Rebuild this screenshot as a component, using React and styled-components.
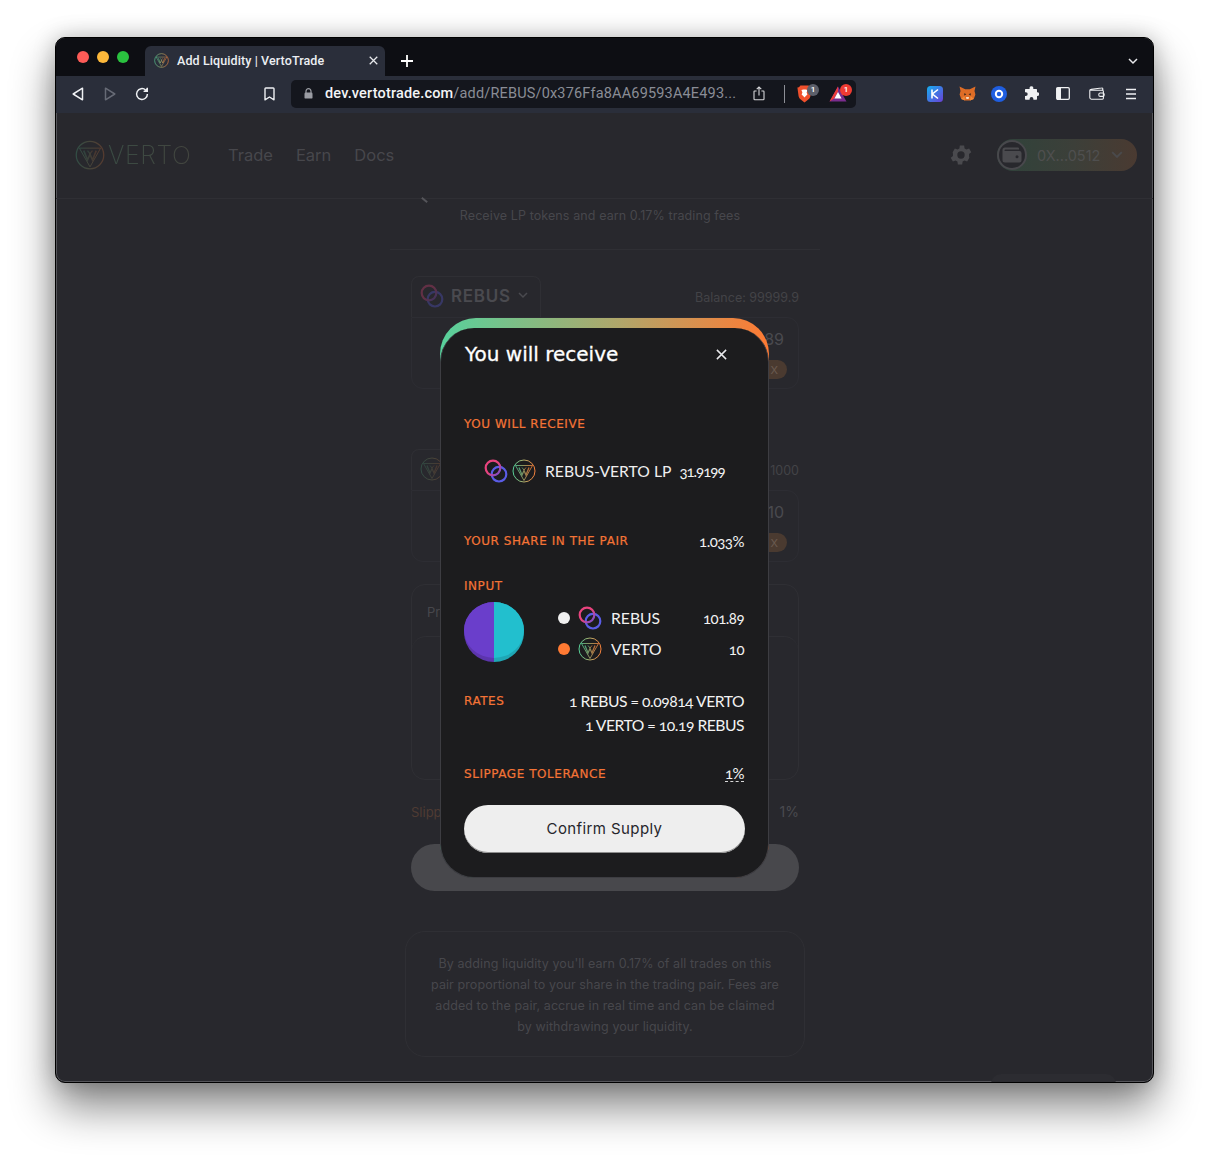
import React from "react";
import styled, { createGlobalStyle } from "styled-components";

const GlobalStyle = createGlobalStyle`
	html, body {
		margin: 0;
		padding: 0;
		background: #ffffff;
	}
	body {
		font-family: "Inter", "Liberation Sans", sans-serif;
	}
	* {
		box-sizing: border-box;
	}
`;

const Stage = styled.div`
	width: 1209px;
	height: 1156px;
	padding: 37px 55px 0;
	overflow: hidden;
`;

const BrowserWindow = styled.div`
	position: relative;
	width: 1099px;
	height: 1046px;
	border-radius: 10px;
	border: 1px solid #000;
	box-shadow: inset 0 0 0 1px #55555a, 0 24px 44px rgba(0, 0, 0, 0.48), 0 0 22px rgba(0, 0, 0, 0.22);
	overflow: hidden;
	background: #28282d;
	display: flex;
	flex-direction: column;
`;

/* browser chrome */
const TitleBar = styled.div`
	height: 38px;
	flex: none;
	background: #0d0e13;
	display: flex;
	align-items: flex-end;
	padding-left: 21px;
`;

const Lights = styled.div`
	display: flex;
	gap: 8px;
	align-self: flex-start;
	margin-top: 13px;
	width: 68px;
`;

const Light = styled.span`
	width: 12px;
	height: 12px;
	border-radius: 50%;
	background: ${(p) => p.$color};
`;

const Tab = styled.div`
	width: 240px;
	height: 30px;
	background: #2a2e3a;
	border-radius: 6px 6px 0 0;
	display: flex;
	align-items: center;
	padding: 0 7px 1px 9px;
	color: #eceef2;
	font-size: 12px;
	font-weight: 600;
`;

const TabTitle = styled.span`
	margin-left: 8px;
	flex: 1;
	font-family: "Roboto", sans-serif;
	font-weight: 500;
	font-size: 12.5px;
	letter-spacing: 0.1px;
`;

const NewTab = styled.span`
	display: flex;
	margin: 0 0 9px 16px;
`;

const TabMenu = styled.span`
	display: flex;
	margin: 0 15px 11px auto;
`;

const ToolBar = styled.div`
	height: 37px;
	flex: none;
	background: #2a2e3a;
	display: flex;
	align-items: center;
	padding: 0 14px 2px 15px;
`;

const ToolSlot = styled.span`
	width: ${(p) => p.$w || 32}px;
	margin-left: ${(p) => p.$ml || 0}px;
	display: flex;
	justify-content: center;
	align-items: center;
	flex: none;
	position: relative;
`;

const UrlBar = styled.div`
	width: 565px;
	height: 28px;
	margin-left: 8px;
	margin-right: 63px;
	background: #14161d;
	border-radius: 5px;
	display: flex;
	align-items: center;
	padding-left: 13px;
	font-family: "Roboto", sans-serif;
	font-size: 14.5px;
	letter-spacing: 0.17px;
	color: #8a8d96;
	flex: none;
`;

const UrlText = styled.span`
	margin-left: 12px;
	width: 428px;
	flex: none;
	white-space: nowrap;
	overflow: hidden;
	b {
		font-weight: 500;
		color: #f3f4f6;
	}
`;

const UrlDivider = styled.span`
	width: 1px;
	height: 18px;
	background: #8d8f96;
	margin: 0 7px 0 19px;
`;

const Badge = styled.span`
	position: absolute;
	top: ${(p) => p.$top}px;
	right: ${(p) => p.$right}px;
	width: 12px;
	height: 12px;
	border-radius: 50%;
	background: ${(p) => p.$color};
	color: #fff;
	font-size: 8px;
	font-weight: 600;
	display: flex;
	align-items: center;
	justify-content: center;
`;

/* dimmed page behind the dialog */
const Page = styled.div`
	position: relative;
	flex: 1;
	overflow: hidden;
	display: flex;
	flex-direction: column;
`;

const Nav = styled.div`
	height: 86px;
	flex: none;
	border-bottom: 1px solid #2f2f34;
	display: flex;
	align-items: center;
	padding: 0 16px 1px 19px;
	color: #47474c;
`;

const LogoWord = styled.span`
	font-size: 25px;
	font-weight: 200;
	letter-spacing: 0.6px;
	margin-left: 3px;
	width: 120px;
	background: linear-gradient(90deg, #3a4c44, 50%, #47423d);
	-webkit-background-clip: text;
	background-clip: text;
	color: transparent;
`;

const NavLink = styled.span`
	font-size: 16.5px;
	margin-right: 23px;
`;

const NavSpacer = styled.span`
	flex: 1;
`;

const WalletPill = styled.div`
	width: 140px;
	height: 32px;
	margin-left: 23px;
	border-radius: 16px;
	background: linear-gradient(90deg, #2f433b, #3c3f39 55%, #4a3a31);
	display: flex;
	align-items: center;
	color: #4f4f4f;
	font-size: 15px;
	gap: 8px;
`;

const WalletCoin = styled.span`
	width: 30px;
	height: 30px;
	border-radius: 50%;
	border: 2px solid #48484c;
	background: #28282d;
	display: flex;
	align-items: center;
	justify-content: center;
	flex: none;
`;

const WalletAddress = styled.span`
	margin-left: 2px;
	font-size: 14.5px;
	width: 66px;
`;

const Column = styled.div`
	width: 430px;
	margin-left: 334px;
	display: flex;
	flex-direction: column;
	position: relative;
`;

const Subtitle = styled.div`
	height: 51px;
	border-bottom: 1px solid #2f2f34;
	font-size: 12.5px;
	color: #47474c;
	text-align: center;
	padding: 9px 10px 0 0;
	letter-spacing: 0.1px;
`;

const BackTick = styled.span`
	position: absolute;
	top: 0;
	left: 31px;
	width: 7px;
	height: 2px;
	background: #55555a;
	transform: rotate(40deg);
`;

const Form = styled.div`
	padding: 26px 21px 0;
	display: flex;
	flex-direction: column;
`;

const TokenHead = styled.div`
	display: flex;
	align-items: center;
	justify-content: space-between;
	height: 41px;
`;

const TokenSelect = styled.div`
	width: 130px;
	height: 41px;
	border: 1px solid #2f2f34;
	border-bottom: none;
	border-radius: 8px 8px 0 0;
	display: flex;
	align-items: center;
	gap: 7px;
	padding: 0 0 3px 8px;
	color: #4a4a4f;
	font-size: 17px;
	font-weight: 600;
	letter-spacing: 0.7px;
`;

const Balance = styled.span`
	font-size: 12.5px;
	color: #434347;
	padding-top: 1px;
`;

const TokenField = styled.div`
	height: 72px;
	margin-bottom: ${(p) => p.$mb}px;
	border-radius: 0 12px 12px 12px;
	border: 1px solid #2d2d33;
	display: flex;
	flex-direction: column;
	align-items: flex-end;
	padding: 11px 14px 0 0;
	color: #4a4a4f;
	font-size: 16px;
	gap: 11px;
`;

const MaxPill = styled.span`
	width: 38px;
	height: 19px;
	margin-right: -3px;
	border-radius: 10px;
	background: #4a3a30;
	color: #6a5a50;
	font-size: 11px;
	display: flex;
	align-items: center;
	justify-content: flex-end;
	padding-right: 9px;
`;

const PricePanel = styled.div`
	height: 196px;
	border: 1px solid #2f2f34;
	border-radius: 14px;
	padding: 19px 0 0 15px;
	font-size: 13px;
	color: #47474c;
	position: relative;
	display: flex;
	flex-direction: column;
	margin-top: 22px;
`;

const PriceInner = styled.div`
	margin: 16px 0 0 -15px;
	flex: 1;
	border-top: 1px solid #2f2f34;
	border-radius: 14px;
`;

const SlippageRow = styled.div`
	display: flex;
	justify-content: space-between;
	margin-top: 24px;
	height: 16px;
	line-height: 16px;
	font-size: 13px;
	color: #4f3b33;
	span:last-child {
		color: #4a4a4f;
		font-size: 14px;
	}
`;

const DisabledButton = styled.div`
	height: 47px;
	margin-top: 24px;
	border-radius: 24px;
	background: #48484c;
`;

const InfoBox = styled.div`
	width: 400px;
	height: 126px;
	margin: 40px 0 0 15px;
	border: 1px solid #2f2f34;
	border-radius: 20px;
	padding: 21px 23px 0;
	text-align: center;
	font-size: 12.5px;
	line-height: 21px;
	color: #47474c;
	letter-spacing: 0.08px;
`;

const FooterStub = styled.div`
	position: absolute;
	left: 935px;
	bottom: -12px;
	width: 125px;
	height: 20px;
	border-radius: 10px;
	background: #2c2c31;
`;

/* dialog */
const Modal = styled.div`
	position: absolute;
	left: 384px;
	top: 205px;
	width: 329px;
	height: 560px;
	border-radius: 36px;
	padding-top: 10px;
	background: linear-gradient(90deg, #57d19c, #b1a66a 55%, #ff7a33);
`;

const ModalBody = styled.div`
	height: 550px;
	border-radius: 34px;
	border: 1px solid #3d3d42;
	border-top: none;
	background: #1c1c1e;
	padding: 13px 24px 0 23px;
	display: flex;
	flex-direction: column;
	color: #f2f2f2;
	font-family: "Lato", "Open Sans", sans-serif;
`;

const ModalHead = styled.div`
	display: flex;
	justify-content: space-between;
	align-items: center;
	height: 26px;
`;

const ModalTitle = styled.h2`
	margin: 0 0 0 1px;
	font-family: "DejaVu Sans", sans-serif;
	font-size: 20px;
	font-weight: 400;
	color: #fff;
	-webkit-text-stroke: 0.3px #fff;
`;

const CloseButton = styled.span`
	display: flex;
	margin-right: 17px;
`;

const Label = styled.span`
	font-family: "DejaVu Sans", sans-serif;
	font-size: 12px;
	color: #f47436;
	letter-spacing: 0.55px;
	-webkit-text-stroke: 0.2px #f47436;
	text-transform: uppercase;
	white-space: nowrap;
	line-height: 14px;
	margin-top: ${(p) => p.$mt || 0}px;
`;

const LabelRow = styled.div`
	margin-top: ${(p) => p.$mt}px;
	display: flex;
	justify-content: space-between;
	align-items: ${(p) => (p.$top ? "flex-start" : "center")};
`;

const Figure = styled.span`
	font-family: "Lato", sans-serif;
	font-feature-settings: "onum";
	font-size: 15px;
	letter-spacing: -0.5px;
	color: #f2f2f2;
	line-height: 16px;
`;

const LpFigure = styled(Figure)`
	letter-spacing: -1px;
`;

const DottedFigure = styled(Figure)`
	border-bottom: 1px dashed #d8d8d8;
	padding-bottom: 1px;
	line-height: 14px;
`;

const LpRow = styled.div`
	margin-top: 27px;
	height: 26px;
	padding-left: 20px;
	display: flex;
	align-items: center;
	gap: 4px;
`;

const LpName = styled.span`
	font-size: 15.7px;
	margin: 0 4px 0 5px;
	color: #eeeeee;
	white-space: nowrap;
`;

const InputGrid = styled.div`
	margin-top: 9px;
	display: flex;
	height: 60px;
`;

const PieWrap = styled.div`
	width: 60px;
	height: 60px;
	flex: none;
	display: flex;
`;

const InputRows = styled.div`
	flex: 1;
	margin-left: 34px;
	display: flex;
	flex-direction: column;
	gap: 7px;
	padding-top: 4px;
`;

const InputRow = styled.div`
	height: 24px;
	display: flex;
	align-items: center;
`;

const Dot = styled.span`
	width: 12px;
	height: 12px;
	border-radius: 50%;
	background: ${(p) => p.$color};
	margin-right: 8px;
`;

const TokenName = styled.span`
	font-size: 15.7px;
	margin-left: 9px;
	flex: 1;
	color: #f0f0f0;
`;

const RatesList = styled.div`
	display: flex;
	flex-direction: column;
	align-items: flex-end;
	gap: 8px;
	font-size: 15.7px;
	line-height: 16px;
	letter-spacing: -0.5px;
	font-feature-settings: "onum";
`;

const ConfirmButton = styled.button`
	margin-top: 23px;
	width: 281px;
	height: 48px;
	padding: 0 0 2px;
	border: none;
	border-radius: 24px;
	background: #eeeeee;
	box-shadow: inset 0 -1px 0 #8d8d8d;
	color: #26262c;
	font-family: "Inter", sans-serif;
	font-size: 15px;
	letter-spacing: 0.4px;
	flex: none;
`;

const RebusMark = ({ id, size = 24, dim }) => (
	<svg width={size} height={size} viewBox="0 0 24 24" fill="none" opacity={dim ? 0.3 : 1}>
		<defs>
			<linearGradient id={id} x1="0" y1="0" x2="1" y2="1">
				<stop offset="0.5" stopColor="#e8437e" />
				<stop offset="0.85" stopColor="#8a4cc0" />
			</linearGradient>
		</defs>
		<circle cx="15" cy="15.2" r="7.3" stroke="#5a5ce6" strokeWidth="2.2" />
		<circle cx="9" cy="9" r="7.3" stroke={`url(#${id})`} strokeWidth="2.2" />
	</svg>
);

const VertoMark = ({ id, size = 24, dim }) => (
	<svg width={size} height={size} viewBox="0 0 24 24" fill="none" opacity={dim ? 0.22 : 1}>
		<defs>
			<linearGradient id={id} x1="0" y1="0.5" x2="1" y2="0.5">
				<stop offset="0" stopColor="#55cf98" />
				<stop offset="0.55" stopColor="#b8a765" />
				<stop offset="1" stopColor="#f57f3a" />
			</linearGradient>
		</defs>
		<circle cx="12" cy="12" r="11" stroke={`url(#${id})`} strokeWidth="1" />
		<path d="M3.5 6.5H20.5L12 21.5Z" stroke={`url(#${id})`} strokeWidth="0.8" />
		<path d="M7 8.5L10 16L12 11.5L14 16L17 8.5" stroke={`url(#${id})`} strokeWidth="1.3" opacity="0.75" />
		<path d="M10 8.5L12 11L14 8.5" stroke={`url(#${id})`} strokeWidth="1" opacity="0.7" />
	</svg>
);

const PieChart = () => (
	<svg width="60" height="60" viewBox="0 0 60 60">
		<path d="M30 0A30 30 0 0 0 30 60Z" fill="#5c35ad" />
		<path d="M30 0A30 30 0 0 1 30 60Z" fill="#1fa7b5" />
		<path d="M30 0A30 28 0 0 0 30 56Z" fill="#6a3ecb" />
		<path d="M30 0A30 28 0 0 1 30 56Z" fill="#22bfce" />
	</svg>
);

const BackIcon = ({ color = "#eef0f3" }) => (
	<svg width="12" height="14" viewBox="0 0 12 14" fill="none" stroke={color} strokeWidth="1.5" strokeLinejoin="round">
		<path d="M10.5 1.2V12.8L1.2 7Z" />
	</svg>
);

const ForwardIcon = () => (
	<svg width="12" height="14" viewBox="0 0 12 14" fill="none" stroke="#666a75" strokeWidth="1.5" strokeLinejoin="round">
		<path d="M1.5 1.2V12.8L10.8 7Z" />
	</svg>
);

const ReloadIcon = () => (
	<svg width="14" height="14" viewBox="0 0 14 14" fill="none" stroke="#eef0f3" strokeWidth="1.5">
		<path d="M12.4 7A5.4 5.4 0 1 1 10.6 3" />
		<path d="M8.6 4.4H12.3V0.8" strokeWidth="1.4" fill="#eef0f3" />
	</svg>
);

const BookmarkIcon = () => (
	<svg width="11" height="14" viewBox="0 0 11 14" fill="none" stroke="#eef0f3" strokeWidth="1.4" strokeLinejoin="round">
		<path d="M1 1.8Q1 1 1.8 1H9.2Q10 1 10 1.8V12.8L5.5 10L1 12.8Z" />
	</svg>
);

const LockIcon = () => (
	<svg width="9" height="11" viewBox="0 0 9 11">
		<path d="M2 5V3.2A2.5 2.5 0 0 1 7 3.2V5" fill="none" stroke="#9a9ca3" strokeWidth="1.2" />
		<rect x="0.5" y="4.6" width="8" height="6" rx="1.2" fill="#9a9ca3" />
	</svg>
);

const ShareIcon = () => (
	<svg width="12" height="15" viewBox="0 0 12 15" fill="none" stroke="#d6d7da" strokeWidth="1.1">
		<path d="M3.6 5H1.6Q1 5 1 5.7V13Q1 13.8 1.8 13.8H10.2Q11 13.8 11 13V5.7Q11 5 10.4 5H8.4" />
		<path d="M6 9.5V1M3.7 3.2L6 1L8.3 3.2" />
	</svg>
);

const BraveIcon = () => (
	<svg width="15" height="18" viewBox="0 0 15 18">
		<path d="M3.4 0.6H11.6L13 2.2L14.6 2.6L13.4 11.2Q13 13.4 11 14.8L7.5 17.4L4 14.8Q2 13.4 1.6 11.2L0.4 2.6L2 2.2Z" fill="#f0502c" />
		<path d="M4.4 5L6.4 4.4H8.6L10.6 5L9.6 7.4L10.4 9.4L8.6 11.2L7.5 12.4L6.4 11.2L4.6 9.4L5.4 7.4Z" fill="#fff" />
	</svg>
);

const BatIcon = () => (
	<svg width="18" height="16" viewBox="0 0 18 16">
		<path d="M9 0.5L0.5 15.5H17.5Z" fill="#7a2c8e" />
		<path d="M9 0.5L0.5 15.5L5 12.5L9 5.5Z" fill="#ee3e3a" />
		<path d="M5.4 12.6L9 6L12.6 12.6Z" fill="#fff" />
	</svg>
);

const KeplrIcon = () => (
	<svg width="16" height="16" viewBox="0 0 16 16">
		<defs>
			<linearGradient id="keplr-grad" x1="0" y1="0" x2="1" y2="1">
				<stop offset="0" stopColor="#14aff0" />
				<stop offset="1" stopColor="#6b3fd6" />
			</linearGradient>
		</defs>
		<rect width="16" height="16" rx="3.5" fill="url(#keplr-grad)" />
		<path d="M5 3.5V12.5M11 3.5L5.4 8L11 12.5" fill="none" stroke="#fff" strokeWidth="1.6" />
	</svg>
);

const FoxIcon = () => (
	<svg width="17" height="15" viewBox="0 0 17 15">
		<path d="M0.5 0.5L6.2 3.3H10.8L16.5 0.5L15.5 5L16.4 8.6L14.8 13L11 14.5H6L2.2 13L0.6 8.6L1.5 5Z" fill="#dd6c26" />
		<path d="M2.2 13L6 14.5L5.4 10ZM14.8 13L11 14.5L11.6 10Z" fill="#f08a3a" />
		<path d="M5.5 7L7.4 8.4L5 9.5ZM11.5 7L9.6 8.4L12 9.5Z" fill="#3c2a1e" />
		<path d="M7 11H10L9.6 13H7.4Z" fill="#f3d9c0" />
	</svg>
);

const RingIcon = () => (
	<svg width="16" height="16" viewBox="0 0 16 16">
		<circle cx="8" cy="8" r="8" fill="#1f5ee0" />
		<circle cx="8" cy="8" r="4.2" fill="#fff" />
		<circle cx="8" cy="8" r="2.2" fill="#1f5ee0" />
	</svg>
);

const PuzzleIcon = () => (
	<svg width="15" height="15" viewBox="0 0 15 15" fill="#f0f1f3">
		<path d="M5.6 1.6A1.9 1.9 0 0 1 9.3 1.6V3H12.3Q13 3 13 3.7V6.2H13.4A1.9 1.9 0 0 1 13.4 10H13V13Q13 13.8 12.3 13.8H9.4V13A1.9 1.9 0 0 0 5.6 13V13.8H1.7Q1 13.8 1 13V10H1.8A1.9 1.9 0 0 0 1.8 6.2H1V3.7Q1 3 1.7 3H5.6Z" />
	</svg>
);

const SidebarIcon = () => (
	<svg width="14" height="13" viewBox="0 0 14 13" fill="none">
		<rect x="0.7" y="0.7" width="12.6" height="11.6" rx="1.2" stroke="#f0f1f3" strokeWidth="1.3" />
		<rect x="0.7" y="0.7" width="4.3" height="11.6" fill="#f0f1f3" />
	</svg>
);

const WalletIcon = () => (
	<svg width="16" height="13" viewBox="0 0 16 13" fill="none" stroke="#f0f1f3" strokeWidth="1.1">
		<path d="M13.8 3.2V2Q13.8 0.8 12.6 1L2.4 2.2Q0.8 2.4 0.8 3.6V10.6Q0.8 12.2 2.4 12.2H13.4Q14.4 12.2 14.4 11V4.4Q14.4 3.2 13.2 3.2H1.4" />
		<rect x="9.8" y="6" width="5.4" height="3.4" rx="1.4" />
	</svg>
);

const MenuIcon = () => (
	<svg width="12" height="12" viewBox="0 0 12 12" stroke="#eef0f3" strokeWidth="1.3">
		<path d="M1 1.5H11M1 6H11M1 10.5H11" />
	</svg>
);

const CrossIcon = ({ size = 10, color = "#e8e9ec", width = 1.4 }) => (
	<svg width={size} height={size} viewBox="0 0 10 10" stroke={color} strokeWidth={width}>
		<path d="M0.8 0.8L9.2 9.2M9.2 0.8L0.8 9.2" />
	</svg>
);

const PlusIcon = () => (
	<svg width="12" height="12" viewBox="0 0 12 12" stroke="#fff" strokeWidth="1.8">
		<path d="M6 0V12M0 6H12" />
	</svg>
);

const ChevronIcon = ({ color = "#e8e9ec", size = 10 }) => (
	<svg width={size} height={size * 0.7} viewBox="0 0 10 7" fill="none" stroke={color} strokeWidth="1.5">
		<path d="M1 1L5 5L9 1" />
	</svg>
);

const GearIcon = () => (
	<svg width="26" height="26" viewBox="0 0 24 24" fill="#4a4a4e">
		<path d="M19.4 13a7.8 7.8 0 0 0 0-2l2.1-1.6-2-3.5-2.5 1a7.6 7.6 0 0 0-1.7-1l-.4-2.7h-4l-.4 2.7a7.6 7.6 0 0 0-1.7 1l-2.5-1-2 3.5L4.6 11a7.8 7.8 0 0 0 0 2l-2.1 1.6 2 3.5 2.5-1a7.6 7.6 0 0 0 1.7 1l.4 2.7h4l.4-2.7a7.6 7.6 0 0 0 1.7-1l2.5 1 2-3.5ZM12 15.4a3.4 3.4 0 1 1 0-6.8 3.4 3.4 0 0 1 0 6.8Z" />
	</svg>
);

const CoinIcon = () => (
	<svg width="20" height="16" viewBox="0 0 20 16">
		<path d="M3 0.5H16Q17 0.5 17 1.5V2.5H3.5Q2.5 2.5 2.5 3.5Q2.5 4 3.5 4H17.5Q19.5 4 19.5 6V13.5Q19.5 15.5 17.5 15.5H3Q0.5 15.5 0.5 13V3Q0.5 0.5 3 0.5Z" fill="#4a4a4e" />
		<circle cx="15" cy="9.8" r="1.5" fill="#28282d" />
	</svg>
);

export default function App() {
	return (
		<Stage>
			<GlobalStyle />
			<BrowserWindow>
				<TitleBar>
					<Lights>
						<Light $color="#fc5b57" />
						<Light $color="#fdb83a" />
						<Light $color="#2ac23f" />
					</Lights>
					<Tab>
						<VertoMark id="tab-verto" size={15} />
						<TabTitle>Add Liquidity | VertoTrade</TabTitle>
						<CrossIcon size={9} />
					</Tab>
					<NewTab>
						<PlusIcon />
					</NewTab>
					<TabMenu>
						<ChevronIcon />
					</TabMenu>
				</TitleBar>
				<ToolBar>
					<ToolSlot $w={14}><BackIcon /></ToolSlot>
					<ToolSlot $w={50}><ForwardIcon /></ToolSlot>
					<ToolSlot $w={14}><ReloadIcon /></ToolSlot>
					<ToolSlot $w={28} $ml={106}><BookmarkIcon /></ToolSlot>
					<UrlBar>
						<LockIcon />
						<UrlText>
							<b>dev.vertotrade.com</b>/add/REBUS/0x376Ffa8AA69593A4E493...
						</UrlText>
						<ToolSlot $w={12}><ShareIcon /></ToolSlot>
						<UrlDivider />
						<ToolSlot $w={24}>
							<BraveIcon />
							<Badge $color="#5c5f6a" $top={-1} $right={-3}>1</Badge>
						</ToolSlot>
						<ToolSlot $w={36} $ml={4}>
							<BatIcon />
							<Badge $color="#ef3b32" $top={-2} $right={4}>1</Badge>
						</ToolSlot>
					</UrlBar>
					<ToolSlot $w={32}><KeplrIcon /></ToolSlot>
					<ToolSlot $w={32}><FoxIcon /></ToolSlot>
					<ToolSlot $w={32}><RingIcon /></ToolSlot>
					<ToolSlot $w={32}><PuzzleIcon /></ToolSlot>
					<ToolSlot $w={32}><SidebarIcon /></ToolSlot>
					<ToolSlot $w={36}><WalletIcon /></ToolSlot>
					<ToolSlot $w={32}><MenuIcon /></ToolSlot>
				</ToolBar>
				<Page>
					<Nav>
						<VertoMark id="nav-verto" size={30} dim />
						<LogoWord>VERTO</LogoWord>
						<NavLink>Trade</NavLink>
						<NavLink>Earn</NavLink>
						<NavLink>Docs</NavLink>
						<NavSpacer />
						<GearIcon />
						<WalletPill>
							<WalletCoin><CoinIcon /></WalletCoin>
							<WalletAddress>0X...0512</WalletAddress>
							<ChevronIcon color="#4a4a4c" size={12} />
						</WalletPill>
					</Nav>
					<Column>
						<BackTick />
						<Subtitle>Receive LP tokens and earn 0.17% trading fees</Subtitle>
						<Form>
							<TokenHead>
								<TokenSelect>
									<RebusMark id="field-rebus" dim />
									REBUS
									<ChevronIcon color="#4a4a4f" />
								</TokenSelect>
								<Balance>Balance: 99999.9</Balance>
							</TokenHead>
							<TokenField $mb={60}>
								101.89
								<MaxPill>X</MaxPill>
							</TokenField>
							<TokenHead>
								<TokenSelect>
									<VertoMark id="field-verto" dim />
								</TokenSelect>
								<Balance>Balance: 1000</Balance>
							</TokenHead>
							<TokenField $mb={0}>
								10
								<MaxPill>X</MaxPill>
							</TokenField>
							<PricePanel>
								Pr
								<PriceInner />
							</PricePanel>
							<SlippageRow>
								<span>Slippage</span>
								<span>1%</span>
							</SlippageRow>
							<DisabledButton />
						</Form>
						<InfoBox>
							By adding liquidity you'll earn 0.17% of all trades on this pair proportional to your share in the trading pair. Fees are added to the pair, accrue in real time and can be claimed by withdrawing your liquidity.
						</InfoBox>
					</Column>
					<FooterStub />
					<Modal>
						<ModalBody>
							<ModalHead>
								<ModalTitle>You will receive</ModalTitle>
								<CloseButton><CrossIcon size={11} width={1.3} /></CloseButton>
							</ModalHead>
							<LabelRow $mt={50}>
								<Label>You will receive</Label>
							</LabelRow>
							<LpRow>
								<RebusMark id="lp-rebus" />
								<VertoMark id="lp-verto" />
								<LpName>REBUS-VERTO LP</LpName>
								<LpFigure>31.9199</LpFigure>
							</LpRow>
							<LabelRow $mt={49}>
								<Label>Your share in the pair</Label>
								<Figure>1.033%</Figure>
							</LabelRow>
							<LabelRow $mt={30}>
								<Label>Input</Label>
							</LabelRow>
							<InputGrid>
								<PieWrap><PieChart /></PieWrap>
								<InputRows>
									<InputRow>
										<Dot $color="#efefef" />
										<RebusMark id="input-rebus" />
										<TokenName>REBUS</TokenName>
										<Figure>101.89</Figure>
									</InputRow>
									<InputRow>
										<Dot $color="#ff7a33" />
										<VertoMark id="input-verto" />
										<TokenName>VERTO</TokenName>
										<Figure>10</Figure>
									</InputRow>
								</InputRows>
							</InputGrid>
							<LabelRow $mt={31} $top>
								<Label $mt={1}>Rates</Label>
								<RatesList>
									<span>1 REBUS = 0.09814 VERTO</span>
									<span>1 VERTO = 10.19 REBUS</span>
								</RatesList>
							</LabelRow>
							<LabelRow $mt={33}>
								<Label>Slippage tolerance</Label>
								<DottedFigure>1%</DottedFigure>
							</LabelRow>
							<ConfirmButton>Confirm Supply</ConfirmButton>
						</ModalBody>
					</Modal>
				</Page>
			</BrowserWindow>
		</Stage>
	);
}
